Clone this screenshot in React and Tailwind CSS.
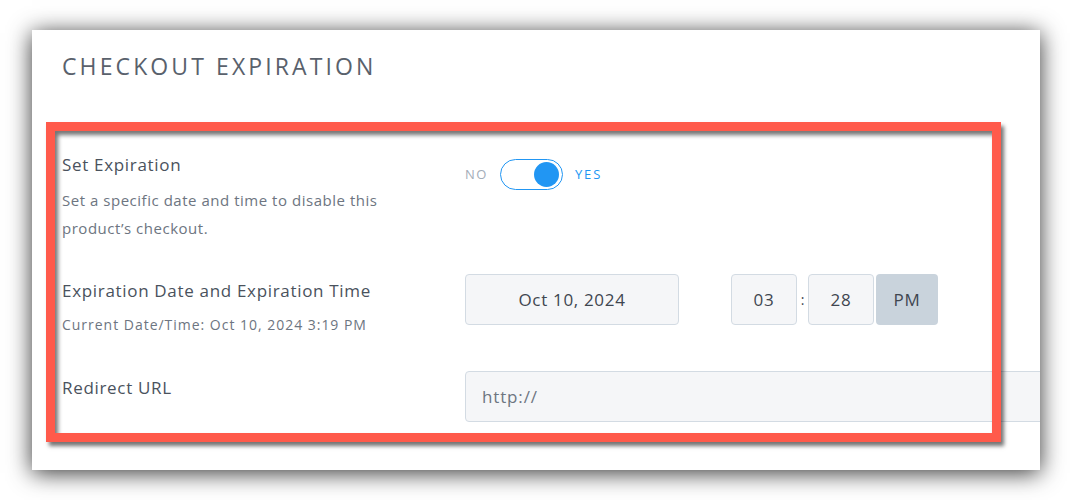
import React from 'react';

const Toggle = () => (
  <div className="flex items-center gap-3 mt-[6px]">
    <span className="text-[13px] tracking-[0.12em] text-[#a3adb8]">NO</span>
    <div className="w-[63px] h-[31px] rounded-full border-[1.5px] border-[#2196f3] bg-white flex items-center justify-end pr-[3px]">
      <div className="w-[25px] h-[25px] rounded-full bg-[#2196f3]" />
    </div>
    <span className="text-[13px] tracking-[0.14em] text-[#2196f3]">YES</span>
  </div>
);

const App = () => {
  return (
    <div className="w-[1070px] h-[500px] bg-white pt-[30px] pl-[32px] overflow-hidden font-['Open_Sans',sans-serif]">
      <div className="relative w-[1008px] h-[440px] bg-white overflow-hidden shadow-[0_3px_22px_rgba(0,0,0,0.8)]">
        <div className="px-[30px] pt-[20px]">
          <h2 className="text-[23px] leading-[32px] tracking-[0.135em] text-[#59616c] font-normal">CHECKOUT EXPIRATION</h2>

          <div className="flex items-start mt-[71px]">
            <div className="w-[403px] shrink-0">
              <div className="text-[17px] leading-[24px] text-[#4a525d] tracking-[0.04em]">Set Expiration</div>
              <p className="mt-[9px] text-[15px] leading-[28px] text-[#6d7581] w-[345px] tracking-[0.035em]">
                Set a specific date and time to disable this product’s checkout.
              </p>
            </div>
            <Toggle />
          </div>

          <div className="flex items-start mt-[32px]">
            <div className="w-[403px] shrink-0 pt-[5px]">
              <div className="text-[17px] leading-[24px] text-[#4a525d] tracking-[0.04em]">Expiration Date and Expiration Time</div>
              <div className="mt-[12px] text-[14px] leading-[20px] text-[#6d7581] tracking-[0.07em]">Current Date/Time: Oct 10, 2024 3:19 PM</div>
            </div>
            <div className="shrink-0 w-[214px] h-[51px] rounded-[4px] border border-[#d3dbe3] bg-[#f5f6f8] flex items-center justify-center text-[17px] tracking-[0.04em] text-[#3f4650]">
              Oct 10, 2024
            </div>
            <div className="flex items-center ml-[52px] shrink-0">
              <div className="w-[66px] h-[51px] rounded-[4px] border border-[#d3dbe3] bg-[#f5f6f8] flex items-center justify-center text-[17px] tracking-[0.04em] text-[#3f4650]">03</div>
              <span className="w-[11px] text-center text-[14px] text-[#3f4650]">:</span>
              <div className="w-[66px] h-[51px] rounded-[4px] border border-[#d3dbe3] bg-[#f5f6f8] flex items-center justify-center text-[17px] tracking-[0.04em] text-[#3f4650]">28</div>
              <div className="ml-[2px] w-[62px] h-[51px] rounded-[4px] bg-[#c9d3dc] flex items-center justify-center text-[17px] tracking-[0.04em] text-[#3f4650]">PM</div>
            </div>
          </div>

          <div className="flex items-start mt-[36px]">
            <div className="w-[403px] shrink-0 pt-[5px]">
              <div className="text-[17px] leading-[24px] text-[#4a525d] tracking-[0.04em]">Redirect URL</div>
            </div>
            <div className="shrink-0 w-[640px] h-[51px] rounded-[4px] border border-[#d3dbe3] bg-[#f5f6f8] flex items-center pl-[16px] text-[17px] tracking-[0.05em] text-[#6d7581]">
              http://
            </div>
          </div>
        </div>

        <div className="absolute left-[14px] top-[92px] w-[955px] h-[320px] border-[9px] border-[#ff5a4b] shadow-[3px_4px_4px_rgba(0,0,0,0.55),inset_3px_4px_4px_rgba(0,0,0,0.55)] pointer-events-none" />
      </div>
    </div>
  );
};

export default App;
